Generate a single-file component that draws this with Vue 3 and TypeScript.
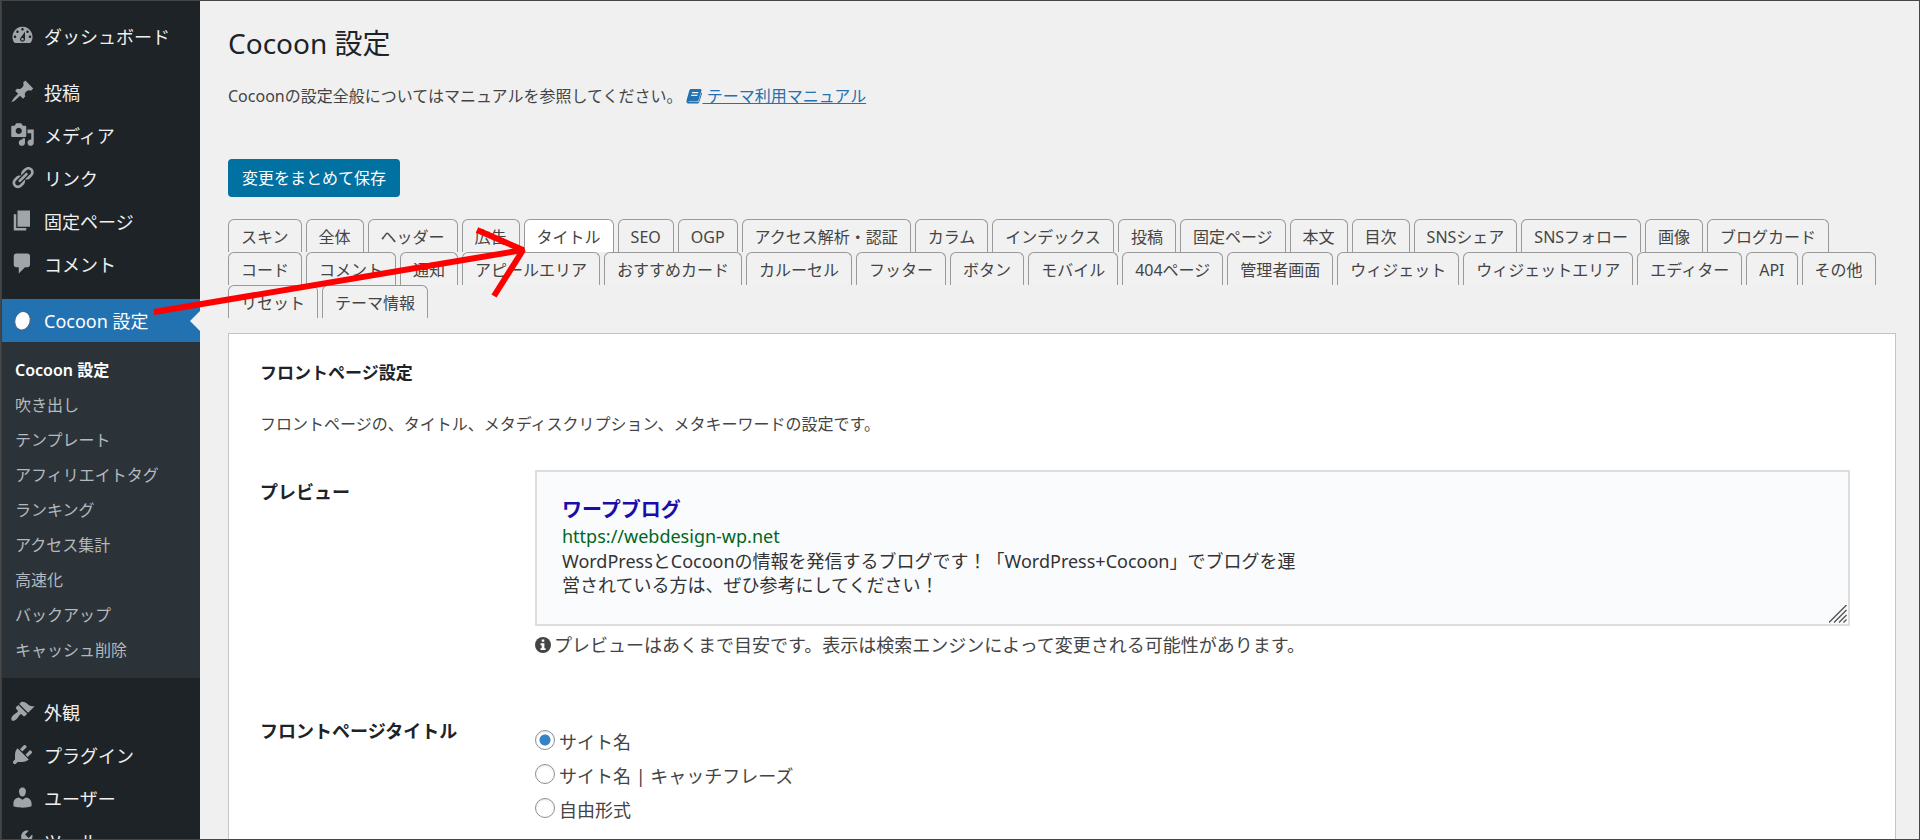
<script setup lang="ts">
import { ref } from 'vue'

interface MenuItem {
  label: string
  icon: string
}

const primary: MenuItem[] = [
  {
    label: '投稿',
    icon: 'M10.44 3.02l1.82-1.82 6.36 6.35-1.83 1.82c-1.05-.68-2.48-.57-3.41.36l-.75.75c-.92.93-1.04 2.35-.35 3.41l-1.83 1.82-2.41-2.41-2.8 2.79c-.42.42-3.38 2.71-3.8 2.29s1.86-3.39 2.28-3.81l2.79-2.79L4.1 9.36l1.83-1.82c1.05.69 2.48.57 3.4-.36l.75-.75c.93-.92 1.05-2.35.36-3.41z',
  },
  {
    label: 'メディア',
    icon: 'M13 11V4c0-.55-.45-1-1-1h-1.67L9 1H5L3.67 3H2c-.55 0-1 .45-1 1v7c0 .55.45 1 1 1h10c.55 0 1-.45 1-1zM7 4.5c1.38 0 2.5 1.12 2.5 2.5S8.38 9.5 7 9.5 4.5 8.38 4.5 7 5.62 4.5 7 4.5zM14 6h5v10.5c0 1.38-1.12 2.5-2.5 2.5S14 17.88 14 16.5s1.12-2.5 2.5-2.5c.17 0 .34.02.5.05V9h-3V6zm-4 8.05V13h2v3.5c0 1.38-1.12 2.5-2.5 2.5S7 17.88 7 16.5 8.12 14 9.5 14c.17 0 .34.02.5.05z',
  },
  {
    label: 'リンク',
    icon: 'M17.74 2.76c1.68 1.69 1.68 4.41 0 6.1l-1.53 1.52c-1.12 1.12-2.7 1.47-4.14 1.09l2.62-2.61.76-.77.76-.76c.84-.84.84-2.2 0-3.04-.84-.85-2.2-.85-3.04 0l-.77.76-3.38 3.38c-.37-1.44-.02-3.02 1.1-4.14l1.52-1.53c1.69-1.68 4.42-1.68 6.1 0zM8.59 13.43l5.34-5.34c.42-.42.42-1.1 0-1.52-.44-.43-1.13-.39-1.53 0l-5.33 5.34c-.42.42-.42 1.1 0 1.52.44.43 1.13.39 1.52 0zm-.76 2.29l4.14-4.15c.38 1.44.03 3.02-1.09 4.14l-1.52 1.53c-1.69 1.68-4.41 1.68-6.1 0-1.68-1.68-1.68-4.42 0-6.1l1.53-1.52c1.12-1.12 2.7-1.47 4.14-1.1l-4.14 4.15c-.85.84-.85 2.2 0 3.05.84.84 2.2.84 3.04 0z',
  },
  { label: '固定ページ', icon: 'M6 15V2h10v13H6zm-1 1h8v2H3V5h2v11z' },
  {
    label: 'コメント',
    icon: 'M5 2h9c1.1 0 2 .9 2 2v7c0 1.1-.9 2-2 2h-2l-5 5v-5H5c-1.1 0-2-.9-2-2V4c0-1.1.9-2 2-2z',
  },
]

const secondary: MenuItem[] = [
  {
    label: '外観',
    icon: 'M14.48 11.06L7.41 3.99l1.5-1.5c.5-.56 2.3-.47 3.51.32 1.21.8 1.43 1.28 2.91 2.1 1.18.64 2.45 1.26 4.45.85zm-.71.71L6.7 4.7 4.93 6.47c-.39.39-.39 1.02 0 1.41l1.06 1.06c.39.39.39 1.03 0 1.42-.6.6-1.43 1.11-2.21 1.69-.35.26-.7.53-1.01.84C1.43 14.23.4 16.08 1.4 17.07c.99 1 2.84-.03 4.18-1.36.31-.31.58-.66.85-1.02.57-.78 1.08-1.61 1.69-2.21.39-.39 1.02-.39 1.41 0l1.06 1.06c.39.39 1.02.39 1.41 0z',
  },
  {
    label: 'プラグイン',
    icon: 'M13.11 4.36L9.87 7.6 8 5.73l3.24-3.24c.35-.34 1.05-.2 1.56.32.52.51.66 1.21.31 1.55zm-8 1.77l.91-1.12 9.01 9.01-1.19.84c-.71.71-2.63 1.16-3.82 1.16H6.14L4.9 17.26c-.59.59-1.54.59-2.12 0-.59-.58-.59-1.53 0-2.12l1.24-1.24v-3.88c0-1.13.4-3.19 1.09-3.89zm7.26 3.97l3.24-3.24c.34-.35 1.04-.21 1.55.31.52.51.66 1.21.31 1.55l-3.24 3.25z',
  },
  {
    label: 'ユーザー',
    icon: 'M10 9.25c-2.27 0-2.73-3.44-2.73-3.44C7 4.02 7.82 2 9.97 2c2.16 0 2.98 2.02 2.71 3.81 0 0-.41 3.44-2.68 3.44zm0 2.57L12.72 10c2.39 0 4.52 2.33 4.52 4.53v2.49s-3.65 1.13-7.24 1.13c-3.65 0-7.24-1.13-7.24-1.13v-2.49c0-2.25 1.94-4.48 4.47-4.48z',
  },
  {
    label: 'ツール',
    icon: 'M16.68 9.77c-1.34 1.34-3.3 1.67-4.95.99l-5.41 6.52c-.99.99-2.59.99-3.58 0s-.99-2.59 0-3.57l6.52-5.42c-.68-1.65-.35-3.61.99-4.95 1.28-1.28 3.12-1.62 4.72-1.06l-2.89 2.89 2.82 2.82 2.86-2.87c.53 1.58.18 3.39-1.08 4.65zM3.81 16.21c.4.39 1.04.39 1.43 0 .4-.4.4-1.04 0-1.43-.39-.4-1.03-.4-1.43 0-.39.39-.39 1.03 0 1.43z',
  },
]

const submenu: string[] = [
  'Cocoon 設定',
  '吹き出し',
  'テンプレート',
  'アフィリエイトタグ',
  'ランキング',
  'アクセス集計',
  '高速化',
  'バックアップ',
  'キャッシュ削除',
]

const tabRows: string[][] = [
  ['スキン', '全体', 'ヘッダー', '広告', 'タイトル', 'SEO', 'OGP', 'アクセス解析・認証', 'カラム', 'インデックス', '投稿', '固定ページ', '本文', '目次', 'SNSシェア', 'SNSフォロー', '画像', 'ブログカード'],
  ['コード', 'コメント', '通知', 'アピールエリア', 'おすすめカード', 'カルーセル', 'フッター', 'ボタン', 'モバイル', '404ページ', '管理者画面', 'ウィジェット', 'ウィジェットエリア', 'エディター', 'API', 'その他'],
  ['リセット', 'テーマ情報'],
]

const activeTab = ref('タイトル')

const titleOptions = [
  { value: 'site', label: 'サイト名' },
  { value: 'tagline', label: 'サイト名 | キャッチフレーズ' },
  { value: 'free', label: '自由形式' },
]
const titleFormat = ref('site')
</script>

<template>
  <div class="app">
    <nav class="sidebar" aria-label="メインメニュー">
      <ul class="menu">
        <li>
          <a href="#" class="item">
            <svg class="icon" viewBox="0 0 20 20" aria-hidden="true">
              <path d="M3.76 16h12.48A7.998 7.998 0 0 0 10 3a7.998 7.998 0 0 0-6.24 13zM10 4c.55 0 1 .45 1 1s-.45 1-1 1-1-.45-1-1 .45-1 1-1zM6 6c.55 0 1 .45 1 1s-.45 1-1 1-1-.45-1-1 .45-1 1-1zm8 0c.55 0 1 .45 1 1s-.45 1-1 1-1-.45-1-1 .45-1 1-1zm-5.37 5.55L12 7v6c0 1.1-.9 2-2 2s-2-.9-2-2c0-.57.24-1.08.63-1.45zM4 10c.55 0 1 .45 1 1s-.45 1-1 1-1-.45-1-1 .45-1 1-1zm12 0c.55 0 1 .45 1 1s-.45 1-1 1-1-.45-1-1 .45-1 1-1zm-5 3c0-.55-.45-1-1-1s-1 .45-1 1 .45 1 1 1 1-.45 1-1z" />
            </svg>
            <span>ダッシュボード</span>
          </a>
        </li>
      </ul>
      <ul class="menu">
        <li v-for="item in primary" :key="item.label">
          <a href="#" class="item">
            <svg class="icon" viewBox="0 0 20 20" aria-hidden="true"><path :d="item.icon" /></svg>
            <span>{{ item.label }}</span>
          </a>
        </li>
      </ul>
      <ul class="menu">
        <li>
          <a href="#" class="item current">
            <svg class="icon" viewBox="0 0 20 20" aria-hidden="true">
              <ellipse cx="10" cy="11" rx="6.1" ry="7.5" transform="rotate(16 10 11)" fill="#fff" stroke="#4b6580" stroke-width=".8" />
            </svg>
            <span>Cocoon 設定</span>
          </a>
          <ul class="submenu">
            <li v-for="(label, i) in submenu" :key="label">
              <a href="#" :class="{ selected: i === 0 }">{{ label }}</a>
            </li>
          </ul>
        </li>
      </ul>
      <ul class="menu">
        <li v-for="item in secondary" :key="item.label">
          <a href="#" class="item">
            <svg class="icon" viewBox="0 0 20 20" aria-hidden="true"><path :d="item.icon" /></svg>
            <span>{{ item.label }}</span>
          </a>
        </li>
      </ul>
    </nav>

    <main class="content">
      <h1>Cocoon 設定</h1>
      <p class="intro">
        Cocoonの設定全般についてはマニュアルを参照してください。<a href="#"><svg class="book" viewBox="0 0 16 16" aria-hidden="true">
          <path fill-rule="evenodd" d="M5 1h9.2c.9 0 1.5.8 1.2 1.7l-2.9 9.5c-.2.8-.8 1.2-1.6 1.2H3c-.6 0-.7.7-.1.7h8.7c.5 0 .9-.3 1-.7l2.7-9c.6.4.8.9.6 1.5l-2.6 8.1c-.3.9-1 1.500-1.900 1.500H2.800C1 15.500 0 13.800.6 12.200L3.300 2.600C3.600 1.600 4.100 1 5 1zm1.200 3-.4 1.300h6.300l.4-1.300zm-.8 2.700L5 8h6.300l.4-1.300z" />
        </svg><span> テーマ利用マニュアル</span></a>
      </p>
      <button type="button" class="save">変更をまとめて保存</button>

      <div class="tabs" role="tablist">
        <div v-for="(row, r) in tabRows" :key="r" class="tab-row" role="presentation">
          <button
            v-for="tab in row"
            :key="tab"
            type="button"
            role="tab"
            class="tab"
            :class="{ active: tab === activeTab }"
            :aria-selected="tab === activeTab"
            @click="activeTab = tab"
          >{{ tab }}</button>
        </div>
      </div>

      <section class="panel">
        <h2>フロントページ設定</h2>
        <p class="lead">フロントページの、タイトル、メタディスクリプション、メタキーワードの設定です。</p>

        <div class="field">
          <h3>プレビュー</h3>
          <div>
            <div class="preview">
              <a href="#" class="preview-title">ワープブログ</a>
              <div class="preview-url">https://webdesign-wp.net</div>
              <div class="preview-text">
                WordPressとCocoonの情報を発信するブログです！「WordPress+Cocoon」でブログを運<br />営されている方は、ぜひ参考にしてください！
              </div>
              <svg class="grip" viewBox="0 0 18 18" aria-hidden="true">
                <path d="M0 17.500 17.500 0M5 17.500 17.500 5M10 17.500 17.500 10M14.500 17.500l3-3" />
              </svg>
            </div>
            <p class="note">
              <svg class="info" viewBox="0 0 16 16" aria-hidden="true">
                <circle cx="8" cy="8" r="8" />
                <path fill="#fff" d="M6.700 2.500h2.600v2.300H6.700zM5.500 6.300h3.900v4.900h1.200v1.900H5.500v-1.900h1.200v-3H5.500z" />
              </svg>
              <span>プレビューはあくまで目安です。表示は検索エンジンによって変更される可能性があります。</span>
            </p>
          </div>
        </div>

        <div class="field title-field">
          <h3 id="title-format">フロントページタイトル</h3>
          <div class="radios" role="radiogroup" aria-labelledby="title-format">
            <label v-for="option in titleOptions" :key="option.value">
              <input v-model="titleFormat" type="radio" name="title-format" :value="option.value" />
              <span>{{ option.label }}</span>
            </label>
          </div>
        </div>
      </section>
    </main>

    <svg class="arrow" viewBox="0 0 540 320" aria-hidden="true">
      <path d="M153 311 522 249" />
      <path d="M476 229l46 20-29 46" />
    </svg>
  </div>
</template>

<style>
body {
  margin: 0;
  background: #f0f0f0;
}
</style>

<style scoped>
* {
  box-sizing: border-box;
}

.app {
  position: relative;
  display: flex;
  height: 100vh;
  overflow: hidden;
  border: 1px solid #464646;
  background: #f0f0f0;
  color: #444;
  font-family: 'Noto Sans', 'Noto Sans CJK JP', sans-serif;
  font-size: 16px;
  line-height: 24px;
}

h1, h2, h3, p, ul {
  margin: 0;
  padding: 0;
}

ul {
  list-style: none;
}

.sidebar {
  display: flex;
  flex-direction: column;
  flex: none;
  gap: 13px;
  width: 199px;
  padding-top: 14px;
  border-left: 1px solid #3c3f42;
  background: #1d2327;
}

.item {
  position: relative;
  display: flex;
  gap: 9px;
  height: 43px;
  padding-left: 8px;
  color: #f0f0f1;
  font-size: 18px;
  line-height: 45px;
  text-decoration: none;
  white-space: nowrap;
}

.icon {
  flex: none;
  width: 25px;
  height: 25px;
  margin-top: 8px;
  fill: #a0a5aa;
}

.current {
  background: #2271b1;
  color: #fff;
}

.current::after {
  content: '';
  position: absolute;
  top: 12px;
  right: 0;
  border: 10px solid transparent;
  border-left-width: 0;
  border-right-color: #f0f0f0;
}

.submenu {
  padding: 11px 0 10px;
  background: #2c3338;
}

.submenu a {
  display: block;
  padding-left: 13px;
  color: #b4b9be;
  line-height: 35px;
  text-decoration: none;
  white-space: nowrap;
}

.submenu .selected {
  color: #fff;
  font-weight: 600;
}

.content {
  flex: 1;
  min-width: 0;
  padding: 22px 23px 0 28px;
}

h1 {
  color: #1d2327;
  font-size: 28px;
  font-weight: 400;
  line-height: 40px;
}

.intro {
  margin-top: 21px;
}

.intro a {
  margin-left: 4px;
  color: #2271b1;
  text-decoration: none;
}

.intro a span {
  text-decoration: underline;
  white-space: pre;
}

.book {
  width: 16px;
  height: 16px;
  vertical-align: -2px;
  fill: #2271b1;
}

.save {
  display: block;
  height: 38px;
  margin-top: 51px;
  padding: 0 14px;
  border: 0;
  border-radius: 4px;
  background: #0071a1;
  color: #fff;
  font: inherit;
}

.tabs {
  margin-top: 22px;
}

.tab-row {
  display: flex;
  gap: 4px;
  height: 33px;
}

.tab {
  flex: none;
  padding: 2px 12px 0;
  border: 1px solid #999;
  border-bottom: 0;
  border-radius: 6px 6px 0 0;
  background: #f1f1f1;
  color: #444;
  font: inherit;
  line-height: 28px;
}

.tab.active {
  background: #fff;
}

.panel {
  margin-top: 15px;
  padding: 27px 45px 60px 31px;
  border: 1px solid #c3c4c7;
  background: #fff;
}

h2, h3 {
  color: #1d2327;
  font-size: 18px;
  font-weight: 700;
  line-height: 24px;
}

h2 {
  font-size: 17px;
}

.lead {
  margin-top: 27px;
}

.field {
  display: grid;
  grid-template-columns: 275px 1fr;
  margin-top: 34px;
}

.field h3 {
  margin-top: 10px;
}

.preview {
  position: relative;
  height: 156px;
  padding: 24px 25px;
  border: 2px solid #ddd;
  background: #fafbfc;
  color: #333;
  font-size: 18px;
}

.preview-title {
  display: block;
  color: #1a0dab;
  font-size: 20px;
  font-weight: 600;
  line-height: 28px;
  text-decoration: none;
}

.preview-url {
  color: #006621;
}

.preview-text {
  margin-top: 1px;
}

.grip {
  position: absolute;
  right: 1px;
  bottom: 1px;
  width: 18px;
  height: 18px;
  fill: none;
  stroke: #555;
  stroke-width: 1.4;
}

.note {
  display: flex;
  align-items: center;
  gap: 3px;
  margin-top: 7px;
  font-size: 18px;
}

.info {
  flex: none;
  width: 16px;
  height: 16px;
  fill: #444;
}

.title-field {
  margin-top: 62px;
}

.title-field h3 {
  margin-top: 0;
}

.radios {
  display: flex;
  flex-direction: column;
  gap: 10px;
  margin-top: 11px;
  font-size: 18px;
}

.radios label {
  display: flex;
  gap: 4px;
}

.radios input {
  flex: none;
  appearance: none;
  width: 20px;
  height: 20px;
  margin: 0;
  border: 1px solid #8c8f94;
  border-radius: 50%;
  background: #fff;
  box-shadow: inset 0 1px 2px rgba(0, 0, 0, 0.1);
}

.radios input:checked {
  background: radial-gradient(circle, #3582c4 5px, #fff 6px);
}

.arrow {
  position: absolute;
  top: 0;
  left: 0;
  width: 540px;
  height: 320px;
  fill: none;
  stroke: #f00;
  stroke-width: 6;
  stroke-linejoin: bevel;
  pointer-events: none;
}
</style>
